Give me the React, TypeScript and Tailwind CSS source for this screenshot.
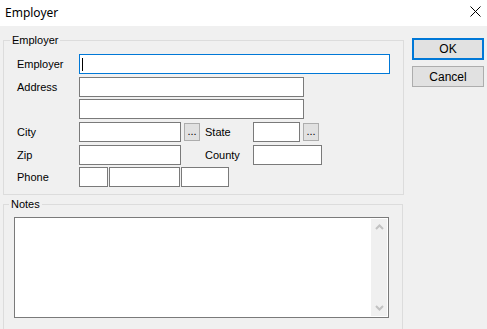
import React from "react";

const font = { fontFamily: '"Liberation Sans", Arial, sans-serif' };

function Box({ w, className = "" }: { w: string; className?: string }) {
  return <div className={`h-[20px] ${w} shrink-0 bg-white border border-[#7a7a7a] ${className}`} />;
}

function Dots() {
  return (
    <div className="ml-[3px] mt-[1px] h-[18px] w-[16px] shrink-0 bg-[#e1e1e1] border border-[#adadad] flex items-end justify-center pb-[3px]">
      <span className="text-[11px] leading-none text-[#000]">...</span>
    </div>
  );
}

function Label({ children, w = "w-[62px]" }: { children: React.ReactNode; w?: string }) {
  return <div className={`${w} shrink-0 text-[11px] leading-[20px] text-black pt-[0px]`}>{children}</div>;
}

export default function App() {
  return (
    <div className="w-[487px] h-[329px] overflow-hidden bg-[#f0f0f0] select-none" style={font}>
      {/* title bar */}
      <div className="h-[26px] bg-white flex items-center justify-between pl-[5px] pr-[5px]">
        <span className="text-[12px] text-black" style={{ fontFamily: '"Noto Sans", "Open Sans", sans-serif' }}>
          Employer
        </span>
        <svg width="11" height="11" viewBox="0 0 11 11" className="mr-[1px] -mt-[4px]">
          <path d="M0.5 0.5 L10.5 10.5 M10.5 0.5 L0.5 10.5" stroke="#000" strokeWidth="1" />
        </svg>
      </div>

      <div className="flex">
        {/* left column */}
        <div className="pl-[3px] w-[404px] shrink-0">
          {/* Employer group */}
          <div className="relative mt-[14px] h-[155px] border border-[#dcdcdc] pl-[13px] pt-[13px]">
            <span className="absolute -top-[8px] left-[6px] px-[2px] bg-[#f0f0f0] text-[11px] leading-[14px] text-black">
              Employer
            </span>
            <div className="flex">
              <Label>Employer</Label>
              <div className="relative h-[20px] w-[311px] bg-white border border-[#0078d7]">
                <span className="absolute left-[2px] top-[3px] h-[13px] w-[1px] bg-black" />
              </div>
            </div>
            <div className="flex mt-[3px]">
              <Label>Address</Label>
              <Box w="w-[225px]" />
            </div>
            <div className="flex mt-[2px]">
              <Label> </Label>
              <Box w="w-[225px]" />
            </div>
            <div className="flex mt-[3px]">
              <Label>City</Label>
              <Box w="w-[102px]" />
              <Dots />
              <div className="ml-[5px] w-[48px] shrink-0 text-[11px] leading-[20px]">State</div>
              <Box w="w-[47px]" />
              <Dots />
            </div>
            <div className="flex mt-[3px]">
              <Label>Zip</Label>
              <Box w="w-[102px]" />
              <div className="ml-[24px] w-[48px] shrink-0 text-[11px] leading-[20px]">County</div>
              <Box w="w-[69px]" />
            </div>
            <div className="flex mt-[2px]">
              <Label>Phone</Label>
              <Box w="w-[29px]" />
              <Box w="w-[71px]" className="ml-[1px]" />
              <Box w="w-[48px]" className="ml-[1px]" />
            </div>
          </div>

          {/* Notes group */}
          <div className="relative mt-[9px] h-[140px] w-[400px] border border-[#dcdcdc] pl-[10px] pt-[12px]">
            <span className="absolute -top-[8px] left-[5px] px-[2px] bg-[#f0f0f0] text-[11px] leading-[14px] text-black">
              Notes
            </span>
            <div className="flex h-[101px] w-[375px] bg-white border border-[#7a7a7a] justify-end p-[1px]">
              <div className="w-[16px] h-full bg-[#f0f0f0] flex flex-col justify-between items-center py-[5px]">
                <svg width="9" height="6" viewBox="0 0 9 6">
                  <path d="M1 5 L4.5 1.5 L8 5" stroke="#c2c2c2" strokeWidth="2" fill="none" />
                </svg>
                <svg width="9" height="6" viewBox="0 0 9 6">
                  <path d="M1 1 L4.5 4.5 L8 1" stroke="#c2c2c2" strokeWidth="2" fill="none" />
                </svg>
              </div>
            </div>
          </div>
        </div>

        {/* right column */}
        <div className="pl-[8px] pt-[12px] flex flex-col gap-[6px]">
          <div className="h-[22px] w-[72px] bg-[#e1e1e1] border-2 border-[#0078d7] flex items-center justify-center text-[12px] text-black">
            OK
          </div>
          <div className="h-[21px] w-[72px] bg-[#e1e1e1] border border-[#adadad] flex items-center justify-center text-[12px] text-black">
            Cancel
          </div>
        </div>
      </div>
    </div>
  );
}
